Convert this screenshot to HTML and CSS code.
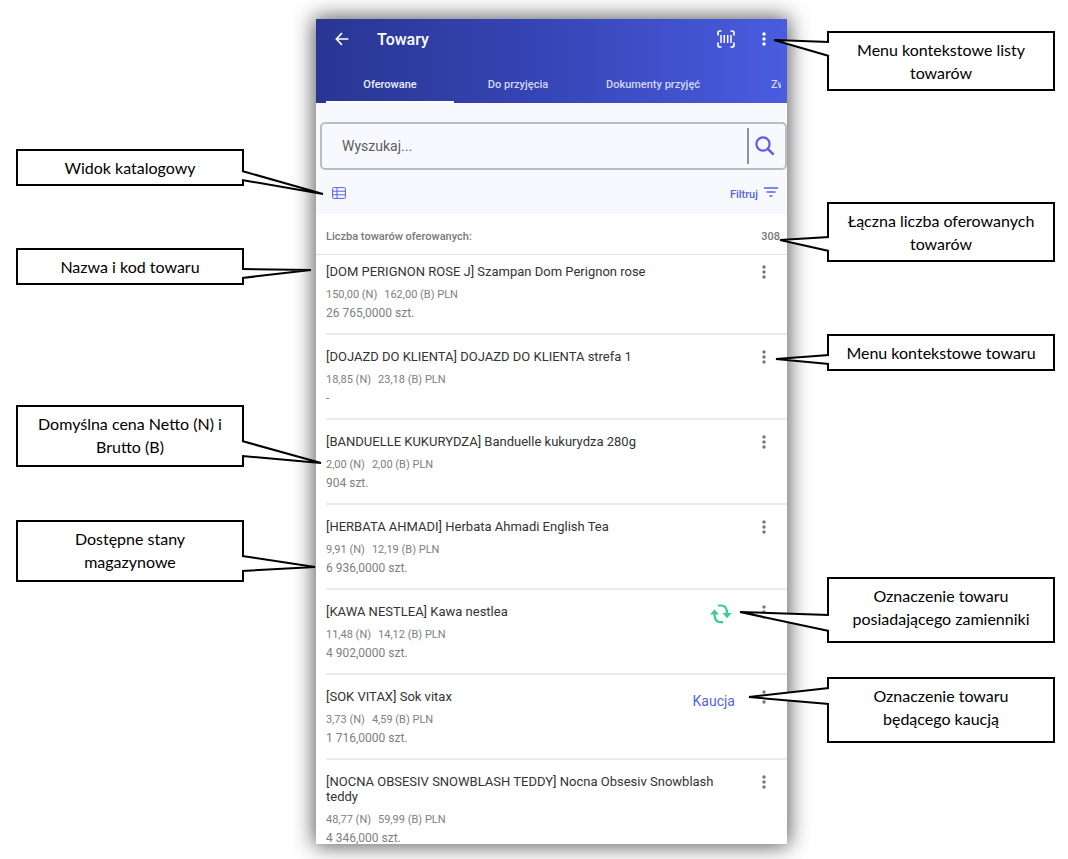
FILE: index.html
```html
<!DOCTYPE html>
<html lang="pl">
<head>
<meta charset="utf-8">
<title>Towary</title>
<link rel="stylesheet" href="styles.css">
</head>
<body>
<svg class="defs" width="0" height="0" aria-hidden="true">
  <symbol id="dots" viewBox="0 0 4 14"><circle cx="2" cy="2" r="1.7"/><circle cx="2" cy="7" r="1.7"/><circle cx="2" cy="12" r="1.7"/></symbol>
</svg>
<main class="stage">
  <div class="anchor">
    <section class="phone">
      <header class="header">
        <div class="topbar">
          <button class="icon-btn" type="button" aria-label="Wstecz"><svg width="14" height="14" viewBox="0 0 14 14" fill="none" stroke="currentColor" stroke-width="1.7"><path d="M7 1 1.4 7 7 13M1.4 7H13.4"/></svg></button>
          <h1 class="title">Towary</h1>
          <button class="icon-btn" type="button" aria-label="Skanuj kod"><svg width="18" height="18" viewBox="0 0 18 18" fill="none" stroke="currentColor"><path stroke-width="1.7" d="M1 5.5V3Q1 1 3 1H4.5M13.5 1H15Q17 1 17 3V5.500M17 12.500V15Q17 17 15 17H13.500M4.500 17H3Q1 17 1 15V12.500"/><path stroke-width="1.5" d="M4 5V13M7.300 5V13M10.700 5V13M14 5V13"/></svg></button>
          <button class="icon-btn" type="button" aria-label="Menu listy"><svg class="dots" width="4" height="14"><use href="#dots"/></svg></button>
        </div>
        <nav class="tabs">
          <a class="tab active" href="#oferowane">Oferowane</a>
          <a class="tab" href="#przyjecia">Do przyjęcia</a>
          <a class="tab wide" href="#dokumenty">Dokumenty przyjęć</a>
          <a class="tab last" href="#zwroty">Zw</a>
        </nav>
      </header>
      <div class="tools">
        <form class="search">
          <input class="search-input" type="text" placeholder="Wyszukaj..." aria-label="Wyszukaj">
          <button class="search-btn" type="button" aria-label="Szukaj"><svg width="20" height="20" viewBox="0 0 20 20" fill="none" stroke="currentColor"><circle cx="8" cy="8" r="6.600" stroke-width="2.200"/><path stroke-width="2.600" d="M12.600 12.600 18.600 18.600"/></svg></button>
        </form>
        <div class="toolrow">
          <button class="view-btn" type="button" aria-label="Widok katalogowy"><svg width="14" height="12" viewBox="0 0 14 12" fill="none" stroke="currentColor" stroke-width="1"><rect x=".6" y=".6" width="12.800" height="10.800" rx="1"/><path d="M5 .6V11.400M.6 4.200H13.400M.6 7.800H13.400"/></svg></button>
          <button class="filter-btn" type="button"><span>Filtruj</span><svg width="14" height="10" viewBox="0 0 14 10" stroke="currentColor" stroke-width="1.700"><path d="M0 1H14M2.500 5H11.500M5.500 9H8.500"/></svg></button>
        </div>
      </div>
      <div class="count"><span>Liczba towarów oferowanych:</span><span>308</span></div>
      <ul class="list">
        <li class="item"><div class="info"><h2 class="name">[DOM PERIGNON ROSE J] Szampan Dom Perignon rose</h2><p class="meta"><span>150,00 (N)</span><span>162,00 (B) PLN</span></p><p class="meta qty">26 765,0000 szt.</p></div><button class="more" type="button" aria-label="Menu towaru"><svg class="dots" width="4" height="14"><use href="#dots"/></svg></button></li>
        <li class="item"><div class="info"><h2 class="name">[DOJAZD DO KLIENTA] DOJAZD DO KLIENTA strefa 1</h2><p class="meta"><span>18,85 (N)</span><span>23,18 (B) PLN</span></p><p class="meta qty">-</p></div><button class="more" type="button" aria-label="Menu towaru"><svg class="dots" width="4" height="14"><use href="#dots"/></svg></button></li>
        <li class="item"><div class="info"><h2 class="name">[BANDUELLE KUKURYDZA] Banduelle kukurydza 280g</h2><p class="meta"><span>2,00 (N)</span><span>2,00 (B) PLN</span></p><p class="meta qty">904 szt.</p></div><button class="more" type="button" aria-label="Menu towaru"><svg class="dots" width="4" height="14"><use href="#dots"/></svg></button></li>
        <li class="item"><div class="info"><h2 class="name">[HERBATA AHMADI] Herbata Ahmadi English Tea</h2><p class="meta"><span>9,91 (N)</span><span>12,19 (B) PLN</span></p><p class="meta qty">6 936,0000 szt.</p></div><button class="more" type="button" aria-label="Menu towaru"><svg class="dots" width="4" height="14"><use href="#dots"/></svg></button></li>
        <li class="item"><div class="info"><h2 class="name">[KAWA NESTLEA] Kawa nestlea</h2><p class="meta"><span>11,48 (N)</span><span>14,12 (B) PLN</span></p><p class="meta qty">4 902,0000 szt.</p></div>
          <svg class="swap" width="22" height="20" viewBox="0 0 22 20"><g fill="none" stroke="currentColor" stroke-width="2.200"><path d="M8 1.500H11C15 1.500 17 4.500 17 9.500"/><path d="M13 18.200H10.500C6.500 18.200 4.500 15 4.500 10"/></g><path fill="currentColor" d="M12.400 9H21.600L17 14.300ZM0 10.500H9L4.500 5.200Z"/></svg>
          <button class="more" type="button" aria-label="Menu towaru"><svg class="dots" width="4" height="14"><use href="#dots"/></svg></button></li>
        <li class="item"><div class="info"><h2 class="name">[SOK VITAX] Sok vitax</h2><p class="meta"><span>3,73 (N)</span><span>4,59 (B) PLN</span></p><p class="meta qty">1 716,0000 szt.</p></div><span class="deposit">Kaucja</span><button class="more" type="button" aria-label="Menu towaru"><svg class="dots" width="4" height="14"><use href="#dots"/></svg></button></li>
        <li class="item"><div class="info"><h2 class="name">[NOCNA OBSESIV SNOWBLASH TEDDY] Nocna Obsesiv Snowblash teddy</h2><p class="meta"><span>48,77 (N)</span><span>59,99 (B) PLN</span></p><p class="meta qty">4 346,000 szt.</p></div><button class="more" type="button" aria-label="Menu towaru"><svg class="dots" width="4" height="14"><use href="#dots"/></svg></button></li>
      </ul>
    </section>

    <div class="callout left catalog">Widok katalogowy<svg class="tail"><path d="M226 22 307 45 226 31"/></svg></div>
    <div class="callout left naming">Nazwa i kod towaru<svg class="tail"><path d="M226 21 295 22 226 30"/></svg></div>
    <div class="callout left double price">Domyślna cena Netto (N) i<br>Brutto (B)<svg class="tail"><path d="M226 36 305 58 226 51"/></svg></div>
    <div class="callout left double stock">Dostępne stany<br>magazynowe<svg class="tail"><path d="M226 36 299 47 226 51"/></svg></div>
    <div class="callout right list-menu">Menu kontekstowe listy<br>towarów<svg class="tail"><path d="M2 11 -53 9 2 25"/></svg></div>
    <div class="callout right total">Łączna liczba oferowanych<br>towarów<svg class="tail"><path d="M2 35 -47 38 2 49"/></svg></div>
    <div class="callout right item-menu">Menu kontekstowe towaru<svg class="tail"><path d="M2 21 -51 25 2 30"/></svg></div>
    <div class="callout right tall substitute">Oznaczenie towaru<br>posiadającego zamienniki<svg class="tail"><path d="M2 38 -87 35 2 54"/></svg></div>
    <div class="callout right tall returnable">Oznaczenie towaru<br>będącego kaucją<svg class="tail"><path d="M2 11 -78 20 2 27"/></svg></div>
  </div>
</main>
</body>
</html>
```

FILE: styles.css
```css
* { box-sizing: border-box; }
body { margin: 0; background: #fff; font-family: Roboto, sans-serif; }
h1, h2, p, ul { margin: 0; padding: 0; font-weight: 400; }
button { margin: 0; padding: 0; border: 0; background: none; color: inherit; font: inherit; cursor: pointer; }
svg { display: block; }
.defs { position: absolute; }

.stage {
  display: grid;
  grid-template-columns: 316fr 471fr 281fr;
  padding: 19px 0 15px;
  overflow: hidden;
}
.anchor { grid-column: 2; position: relative; min-width: 0; }
.phone {
  height: calc(100vh - 34px);
  overflow: hidden;
  background: #fff;
  box-shadow: 0 0 20px 2px rgba(0, 0, 0, .65);
}

.header { color: #fff; background: linear-gradient(90deg, #293693, #3544b3 45%, #4a5ce0); }
.topbar { display: flex; align-items: center; height: 40px; padding: 0 4px 0 7px; }
.icon-btn { display: grid; place-items: center; width: 38px; height: 38px; }
.title { flex: 1; padding: 2px 0 0 16px; font-size: 16px; line-height: 20px; font-weight: 500; }
.dots { fill: currentColor; }
.tabs { display: flex; height: 44px; margin: 0 6px 0 10px; }
.tab {
  flex: none;
  width: 128px;
  padding-top: 18px;
  border-bottom: 2px solid transparent;
  color: #d3d7f6;
  font-size: 11px;
  line-height: 16px;
  font-weight: 500;
  text-align: center;
  text-decoration: none;
}
.tab.active { color: #eceefb; border-color: #fff; }
.tab.wide { width: 142px; }
.tab.last { flex: 1; width: auto; padding-left: 47px; text-align: left; overflow: hidden; }

.tools { padding-top: 19px; background: #f8f9ff; }
.search {
  display: flex;
  align-items: center;
  height: 48px;
  margin-left: 4px;
  padding-right: 4px;
  border: 2px solid #bdbdbf;
  border-radius: 5px;
}
.search-input {
  flex: 1;
  min-width: 0;
  height: 36px;
  padding: 0 20px;
  border: 0;
  border-right: 2px solid #929295;
  outline: 0;
  background: none;
  color: #333;
  font: 14px/20px Roboto, sans-serif;
}
.search-input::placeholder { color: #5c5c5e; opacity: 1; }
.search-btn { display: grid; place-items: center; width: 32px; height: 36px; color: #6257ef; }
.toolrow { display: flex; justify-content: space-between; align-items: center; height: 44px; padding: 1px 9px 0 16px; color: #5563e2; }
.filter-btn { display: flex; gap: 6px; font-size: 11px; line-height: 16px; font-weight: 500; }
.filter-btn span { padding-top: 4px; }
.filter-btn svg { margin-top: 4px; }

.count {
  display: flex;
  justify-content: space-between;
  height: 41px;
  padding: 15px 7px 0 10px;
  border-bottom: 1px solid #e2e2e2;
  color: #777;
  font-size: 11px;
  line-height: 16px;
  font-weight: 500;
}
.list { padding-left: 10px; list-style: none; }
.item { display: flex; align-items: flex-start; padding: 14px 0 10px; border-bottom: 2px solid #ebebeb; }
.item:first-child { padding-top: 9px; }
.info { flex: 1; min-width: 0; }
.name { margin-bottom: 6px; color: #333; font-size: 13px; line-height: 15px; }
.meta { display: flex; gap: 7px; color: #808080; font-size: 11px; line-height: 19px; }
.meta.qty { font-size: 12px; }
.more { display: grid; place-items: center; flex: none; width: 46px; height: 15px; color: #777; }
.swap { margin-right: 9px; color: #3bcb95; }
.deposit { margin-right: 6px; padding-top: 2px; color: #5563e0; font-size: 14px; line-height: 20px; }

.callout {
  position: absolute;
  width: 228px;
  padding: 5px 0;
  border: 2px solid #000;
  background: #fff;
  color: #000;
  font-family: Lato, sans-serif;
  font-size: 16px;
  line-height: 23px;
  text-align: center;
  white-space: nowrap;
}
.left { right: calc(100% + 72px); }
.right { left: calc(100% + 40px); }
.double { padding-bottom: 7px; }
.tall { padding-bottom: 11px; }
.tail { position: absolute; top: -2px; left: -2px; width: 228px; height: 37px; overflow: visible; pointer-events: none; }
.tail path { fill: #fff; stroke: #000; stroke-width: 2; }
.catalog { top: 130px; }
.naming { top: 229px; }
.price { top: 386px; }
.stock { top: 501px; }
.list-menu { top: 12px; }
.total { top: 183px; }
.item-menu { top: 315px; }
.substitute { top: 558px; }
.returnable { top: 658px; }
```
